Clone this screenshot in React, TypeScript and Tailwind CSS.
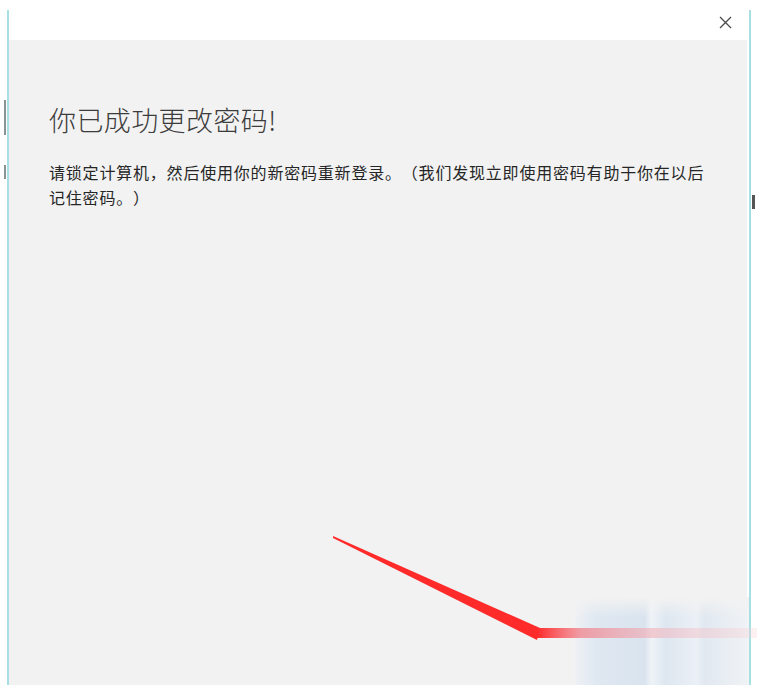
export default function App() {
  return (
    <div className="relative h-[685px] w-[757px] overflow-hidden bg-white font-['Noto_Sans_CJK_SC','Microsoft_YaHei',sans-serif]">
      {/* bits of the window behind */}
      <div className="absolute left-[4px] top-[100px] h-[35px] w-[2px] bg-[#8a9496]" />
      <div className="absolute left-[4px] top-[165px] h-[14px] w-[2px] bg-[#8a9496]" />
      <div className="absolute left-[752px] top-[195px] h-[14px] w-[3px] bg-[#555]" />

      <div className="ml-[7px] mt-[10px] flex h-[675px] w-[744px] flex-col border-x-2 border-[#a8dfe2]">
        <div className="flex h-[30px] shrink-0 items-start justify-end bg-white pr-[17px] pt-[6px]">
          <svg width="13" height="13" viewBox="0 0 13 13" className="text-[#4a4a4a]">
            <path d="M1 1L12 12M12 1L1 12" stroke="currentColor" strokeWidth="1.3" />
          </svg>
        </div>
        <div className="mr-[2px] flex-1 bg-[#f2f2f2] pl-[40px] pt-[62px]">
          <h1 className="text-[27px] font-light leading-[35px] tracking-[0.4px] text-[#3c3c3c]">你已成功更改密码!</h1>
          <p className="mt-[23px] w-[667px] text-[16px] leading-[25px] tracking-[0.8px] text-[#262626] [text-spacing-trim:space-all]">
            请锁定计算机，然后使用你的新密码重新登录。（我们发现立即使用密码有助于你在以后记住密码。）
          </p>
        </div>
      </div>

      {/* blurred thumbnail in the corner */}
      <div className="absolute left-[575px] top-[597px] h-[88px] w-[174px] bg-[linear-gradient(to_right,#eef1f5_0%,#dde7f1_12%,#d7e2ee_40%,#eef3f8_44%,#dbe5f0_52%,#eaf0f6_70%,#dfe7f0_74%,#f0f3f6_100%)] opacity-90" />
      <div className="absolute left-[575px] top-[597px] h-[20px] w-[174px] bg-[linear-gradient(to_bottom,#f2f2f2,transparent)]" />

      {/* red arrow annotation */}
      <svg className="absolute left-0 top-0" width="757" height="685" viewBox="0 0 757 685">
        <defs>
          <linearGradient id="band" x1="537" y1="0" x2="757" y2="0" gradientUnits="userSpaceOnUse">
            <stop offset="0" stopColor="#ff2a2a" />
            <stop offset="0.2" stopColor="#f07a84" stopOpacity="0.7" />
            <stop offset="0.6" stopColor="#f3b3bb" stopOpacity="0.5" />
            <stop offset="1" stopColor="#f6d0d4" stopOpacity="0.3" />
          </linearGradient>
        </defs>
        <polygon points="333,536 540,628 537,640 333,538" fill="#ff2a2a" />
        <rect x="537" y="628" width="220" height="10" fill="url(#band)" />
      </svg>
    </div>
  );
}
